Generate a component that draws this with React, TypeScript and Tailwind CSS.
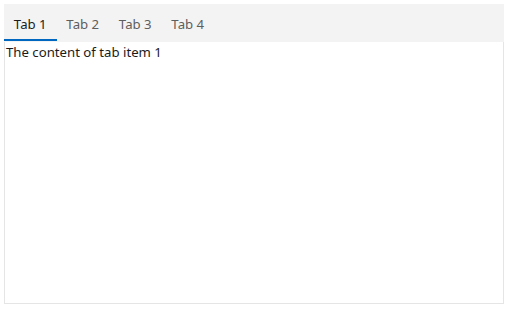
import { useState } from "react";

const tabs = ["Tab 1", "Tab 2", "Tab 3", "Tab 4"];

export default function App() {
  const [active, setActive] = useState(0);

  return (
    <div
      className="p-1 bg-white min-h-screen"
      style={{ fontFamily: '"Segoe UI", "Noto Sans", sans-serif' }}
    >
      <div className="w-[500px]">
        {/* Tab strip */}
        <div className="h-[38px] bg-[#f3f3f3] flex">
          {tabs.map((tab, i) => (
            <button
              key={tab}
              onClick={() => setActive(i)}
              className={`relative w-[52.5px] h-[38px] pt-[10px] text-[13.2px] leading-[20px] text-center self-start flex flex-col items-center justify-start ${
                active === i ? "text-[#1b1b1b]" : "text-[#5e5e5e]"
              }`}
            >
              <span className="block">{tab}</span>
              {active === i && (
                <span className="absolute left-0 right-0 top-[35px] h-[2px] bg-[#0067c0]" />
              )}
            </button>
          ))}
        </div>

        {/* Content */}
        <div className="h-[262px] border-x border-b border-[#e5e5e5] pl-px text-[13.2px] leading-[20px] text-[#1b1b1b]">
          The content of tab item {active + 1}
        </div>
      </div>
    </div>
  );
}
